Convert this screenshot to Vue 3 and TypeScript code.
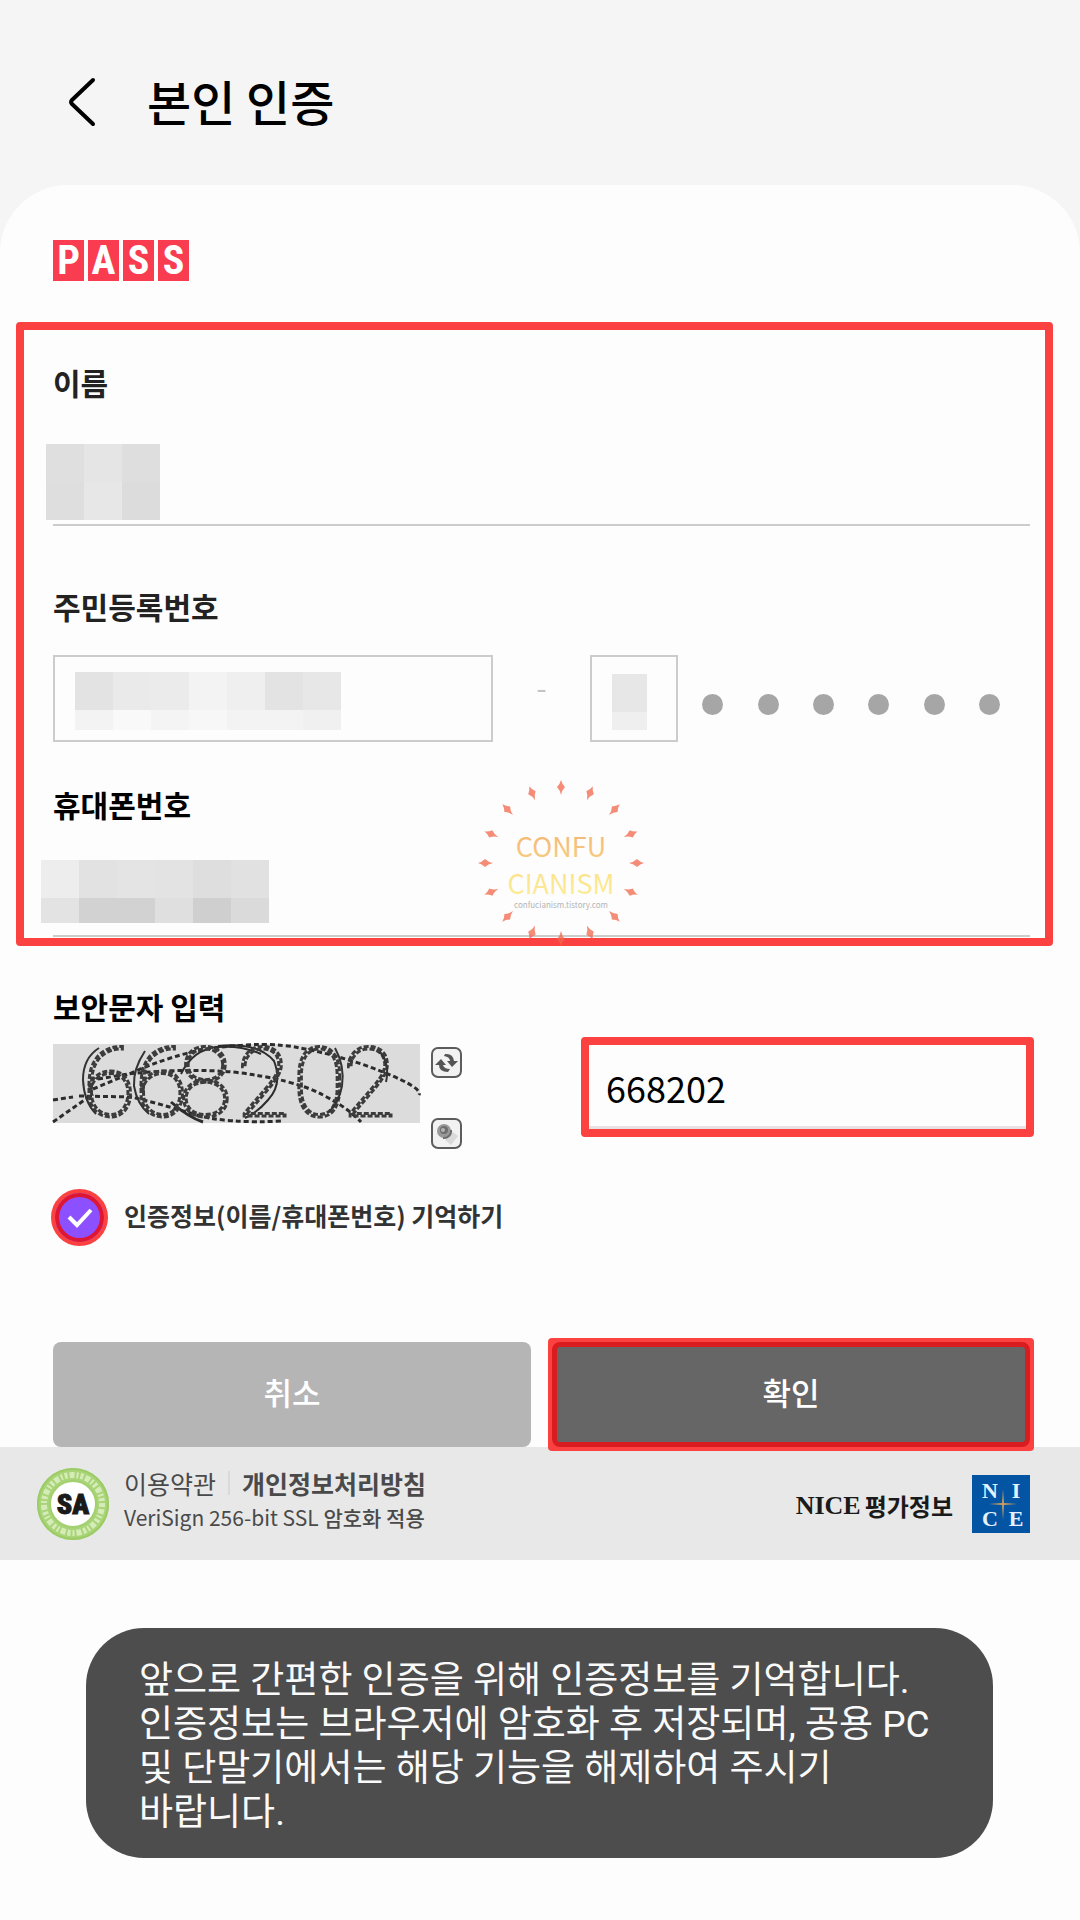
<script setup lang="ts">
import { ref } from 'vue'

const name = ref('')
const birth = ref('')
const gender = ref('')
const phone = ref('')
const captcha = ref('668202')
const remember = ref(true)

const passLetters = ['P', 'A', 'S', 'S']
const rayAngles = Array.from({ length: 16 }, (_, i) => i * 22.5)

const nameTiles = ['#dfdfdf', '#e5e5e5', '#dedede', '#dedede', '#e7e7e7', '#dcdcdc']
const birthTiles = [
  '#e3e3e3', '#eaeaea', '#ebebeb', '#f3f3f3', '#efefef', '#e3e3e3', '#e7e7e7',
  '#f3f3f3', '#f9f9f9', '#f4f4f4', '#f7f7f7', '#f3f3f3', '#f3f3f3', '#f0f0f0',
]
const genderTiles = ['#e7e7e7', '#efefef']
const phoneTiles = [
  '#ededed', '#e2e2e2', '#e4e4e4', '#e3e3e3', '#dedede', '#e1e1e1', '#fdfdfd',
  '#e3e3e3', '#d2d2d2', '#d2d2d2', '#dfdfdf', '#cfcfcf', '#dadada', '#fdfdfd',
]
</script>

<template>
  <div class="screen">
    <header class="topbar">
      <button class="back" type="button" aria-label="뒤로">
        <svg width="30" height="50" viewBox="0 0 30 50" fill="none" stroke="#000" stroke-width="4" stroke-linecap="round" stroke-linejoin="round">
          <path d="M27 3 L6 23 Q4 25 6 27 L27 47" />
        </svg>
      </button>
      <h1>본인 인증</h1>
    </header>

    <main class="card">
      <div class="pass">
        <span v-for="(letter, i) in passLetters" :key="i">{{ letter }}</span>
      </div>

      <form @submit.prevent>
        <section class="marked">
          <label class="label soft" for="name">이름</label>
          <div class="field name-field">
            <input id="name" v-model="name" type="text" />
            <div class="mosaic name-mosaic">
              <i v-for="(c, i) in nameTiles" :key="i" :style="{ background: c }"></i>
            </div>
          </div>

          <label class="label soft rrn-label" for="birth">주민등록번호</label>
          <div class="rrn">
            <div class="field box birth-field">
              <input id="birth" v-model="birth" type="text" />
              <div class="mosaic birth-mosaic">
                <i v-for="(c, i) in birthTiles" :key="i" :style="{ background: c }"></i>
              </div>
            </div>
            <span class="dash">-</span>
            <div class="field box gender-field">
              <input v-model="gender" type="text" aria-label="주민등록번호 뒷자리" />
              <div class="mosaic gender-mosaic">
                <i v-for="(c, i) in genderTiles" :key="i" :style="{ background: c }"></i>
              </div>
            </div>
            <div class="dots"><i v-for="n in 6" :key="n"></i></div>
          </div>

          <label class="label phone-label" for="phone">휴대폰번호</label>
          <div class="field phone-field">
            <input id="phone" v-model="phone" type="tel" />
            <div class="mosaic phone-mosaic">
              <i v-for="(c, i) in phoneTiles" :key="i" :style="{ background: c }"></i>
            </div>
          </div>

          <svg class="watermark" width="170" height="170" viewBox="0 0 170 170">
            <defs>
              <linearGradient id="orange" x1="0" y1="0" x2="0" y2="1">
                <stop offset="0" stop-color="#f3b273" />
                <stop offset="1" stop-color="#f8d083" />
              </linearGradient>
              <linearGradient id="yellow" x1="0" y1="0" x2="0" y2="1">
                <stop offset="0" stop-color="#fbdf84" />
                <stop offset="1" stop-color="#fcee9c" />
              </linearGradient>
            </defs>
            <g fill="#f0664a" fill-opacity="0.75">
              <path v-for="a in rayAngles" :key="a" d="M85 2 Q86 6 89 9 Q86 12 85 17 Q84 12 81 9 Q84 6 85 2 Z" :transform="`rotate(${a} 85 85)`" />
            </g>
            <g text-anchor="middle" font-family="'Noto Sans CJK KR', sans-serif" font-size="27">
              <text x="85" y="79" fill="url(#orange)">CONFU</text>
              <text x="85" y="116" fill="url(#yellow)">CIANISM</text>
              <text x="85" y="130" fill="#b4b4b4" font-size="8">confucianism.tistory.com</text>
            </g>
          </svg>
        </section>

        <div class="lower">
          <label class="label" for="captcha">보안문자 입력</label>
          <div class="captcha-row">
            <div class="captcha">
              <svg width="367" height="79" viewBox="0 0 367 79" role="img" aria-label="보안문자">
                <rect width="367" height="79" fill="#dcdcdc" />
                <g fill="none" stroke="#2c2c2c">
                  <path d="M0 56 L20 53 M26 52 L78 53 Q108 60 140 70 T230 77" stroke-width="3" stroke-dasharray="5 3" />
                  <path d="M0 78 L40 50 M40 45 L90 24 Q130 8 160 4 Q215 -3 247 4 Q290 12 330 28 T366 51" stroke-width="3" stroke-dasharray="5 3" />
                  <path d="M45 35 L75 30 Q130 24 180 28 Q240 35 270 51 Q295 64 308 78" stroke-width="3" stroke-dasharray="5 3" />
                  <path d="M118 58 Q135 73 150 78" stroke-width="3" />
                  <path d="M165 2 Q205 -2 221 17 Q230 40 215 56 Q205 68 192 74" stroke-width="2" />
                  <path d="M128 30 Q140 5 165 3 Q188 1 208 10" stroke-width="2" />
                </g>
                <text y="72" x="30 82 126 184 240 290" fill="none" stroke="#3c3c3c" stroke-width="3" stroke-dasharray="5 2" font-family="Roboto, sans-serif" font-size="96" font-weight="100">668202</text>
                <g fill="none" stroke="#333" stroke-width="2">
                  <path d="M46 4 Q30 14 30 36 Q31 58 43 70" />
                  <path d="M92 7 Q80 25 81 42 Q84 60 96 70" />
                  <path d="M282 4 Q292 22 289 42 Q286 58 276 68" />
                  <path d="M327 8 Q337 20 333 38" />
                </g>
              </svg>
            </div>
            <div class="tools">
              <button type="button" aria-label="새로고침">
                <svg width="27" height="27" viewBox="0 0 27 27">
                  <path d="M12 5 Q20 4 21 12 L25 12 L19 18 L14 12 L17 12 Q17 8 11 7 Z" fill="#555" />
                  <path d="M15 23 Q6 23 6 16 L2 16 L8 10 L13 16 L10 16 Q11 20 17 20 Z" fill="#555" />
                </svg>
              </button>
              <button type="button" aria-label="음성 듣기">
                <svg width="27" height="27" viewBox="0 0 27 27">
                  <path d="M12 20 L20 12 L25 16 L18 25 Z" fill="#d9d9d9" />
                  <circle cx="11" cy="11" r="7" fill="#999" />
                  <path d="M10 18 A7 7 0 0 0 18 10" fill="none" stroke="#6e6e6e" stroke-width="2" />
                  <circle cx="11" cy="10" r="4" fill="#6e6e6e" />
                  <circle cx="10" cy="10" r="2" fill="#b5b5b5" />
                </svg>
              </button>
            </div>
            <input id="captcha" v-model="captcha" class="captcha-input" type="text" />
          </div>

          <label class="remember">
            <span class="tick">
              <input v-model="remember" type="checkbox" />
              <svg v-if="remember" width="28" height="22" viewBox="0 0 28 22" fill="none" stroke="#fff" stroke-width="4">
                <path d="M3 10 L11 18 L25 3" />
              </svg>
            </span>
            <span class="remember-text">인증정보(이름/휴대폰번호) 기억하기</span>
          </label>

          <div class="actions">
            <button class="btn cancel" type="button">취소</button>
            <div class="confirm-mark">
              <button class="btn confirm" type="submit">확인</button>
            </div>
          </div>
        </div>
      </form>

      <footer class="foot">
        <svg class="seal" width="74" height="74" viewBox="0 0 74 74">
          <circle cx="37" cy="37" r="36" fill="#a9d478" />
          <circle cx="37" cy="37" r="35" fill="none" stroke="#9ccc66" stroke-width="2" />
          <circle cx="37" cy="37" r="29" fill="none" stroke="#d5ecb8" stroke-width="6" stroke-dasharray="3 2 5 2 2 2" />
          <circle cx="37" cy="37" r="23" fill="#fff" stroke="#a3d06e" stroke-width="2" />
          <text x="37" y="47" text-anchor="middle" font-family="'Roboto Condensed', 'Noto Sans CJK KR', sans-serif" font-size="28" font-weight="900" fill="#1a1a1a" stroke="#1a1a1a" stroke-width="1">SA</text>
        </svg>
        <div class="terms">
          <p class="links"><a href="#">이용약관</a><i></i><a href="#"><b>개인정보처리방침</b></a></p>
          <p class="ssl">VeriSign 256-bit SSL <span>암호화 적용</span></p>
        </div>
        <div class="nice"><span class="latin">NICE</span><span>평가정보</span></div>
        <svg class="nice-logo" width="58" height="58" viewBox="0 0 58 58">
          <rect width="58" height="58" fill="#0454a4" />
          <path d="M31 14 L32 28 L45 29 L32 30 L31 45 L30 30 L17 29 L30 28 Z" fill="#c89a60" />
          <g fill="#e4f2ff" text-anchor="middle" font-family="'Liberation Serif', serif" font-size="22" font-weight="700">
            <text x="18" y="23">N</text>
            <text x="44" y="23">I</text>
            <text x="18" y="51">C</text>
            <text x="44" y="51">E</text>
          </g>
        </svg>
      </footer>

      <p class="toast" role="status">
        앞으로 간편한 인증을 위해 인증정보를 기억합니다. 인증정보는 브라우저에 암호화 후 저장되며, 공용 PC 및 단말기에서는 해당 기능을 해제하여 주시기 바랍니다.
      </p>
    </main>
  </div>
</template>

<style>
body {
  background: #fdfdfd;
}
</style>

<style scoped>
.screen,
.screen * {
  box-sizing: border-box;
}
.screen {
  min-height: 100vh;
  background: #f5f5f5;
  color: #000;
  font-family: 'Noto Sans CJK KR', sans-serif;
  display: flex;
  flex-direction: column;
}
button,
input {
  margin: 0;
  padding: 0;
  border: 0;
  background: transparent;
  font-family: inherit;
  outline: none;
}
p {
  margin: 0;
}
.topbar {
  display: flex;
  align-items: center;
  gap: 51px;
  height: 185px;
  padding: 18px 66px 0;
}
.back,
.back svg {
  display: block;
}
h1 {
  margin: 0;
  padding-bottom: 4px;
  font-size: 48px;
  font-weight: 500;
  line-height: 72px;
}
.card {
  flex: 1;
  padding: 55px 0 62px;
  border-radius: 68px 68px 0 0;
  background: #fdfdfd;
}
.pass {
  display: flex;
  gap: 4px;
  padding-left: 53px;
}
.pass span {
  width: 31px;
  height: 41px;
  background: #f93c50;
  color: #fff;
  font: 700 40px/42px 'Roboto Condensed', 'Open Sans Condensed', 'Noto Sans CJK KR', sans-serif;
  text-align: center;
}
.marked {
  position: relative;
  margin: 41px 27px 0 16px;
  padding: 30px 15px 1px 29px;
  border: 8px solid #fc4141;
  border-radius: 4px;
}
.label {
  display: block;
  font-size: 30px;
  font-weight: 700;
  line-height: 44px;
}
.soft {
  color: #222;
}
.field {
  position: relative;
}
.field input {
  display: block;
  width: 100%;
  height: 100%;
  padding: 0 20px;
  font-size: 36px;
}
.name-field {
  height: 82px;
  margin-top: 40px;
  border-bottom: 2px solid #ccc;
}
.phone-field {
  height: 77px;
  margin-top: 34px;
  border-bottom: 2px solid #ccc;
}
.rrn-label {
  margin-top: 58px;
}
.phone-label {
  margin-top: 40px;
}
.rrn {
  display: flex;
  height: 87px;
  margin-top: 27px;
}
.box {
  border: 2px solid #ccc;
}
.birth-field {
  flex: 0 0 45%;
}
.gender-field {
  flex: 0 0 9%;
}
.dash {
  flex: 0 0 10%;
  color: #c4c4c4;
  font-size: 30px;
  line-height: 62px;
  text-align: center;
}
.dots {
  flex: 1;
  display: flex;
  justify-content: space-between;
  align-items: center;
  padding: 12px 30px 0 24px;
}
.dots i {
  width: 21px;
  height: 21px;
  border-radius: 50%;
  background: #a6a6a6;
}
.mosaic {
  position: absolute;
  display: grid;
}
.name-mosaic {
  left: -7px;
  bottom: 4px;
  grid-template: 38px 38px / repeat(3, 38px);
}
.birth-mosaic {
  left: 20px;
  top: 15px;
  grid-template: 38px 20px / repeat(7, 38px);
}
.gender-mosaic {
  left: 20px;
  top: 17px;
  grid-template: 38px 18px / 35px;
}
.phone-mosaic {
  left: -12px;
  top: 0;
  grid-template: 38px 25px / repeat(7, 38px);
}
.watermark {
  position: absolute;
  left: 452px;
  top: 448px;
}
.lower {
  padding: 38px 46px 0 53px;
}
.captcha-row {
  display: flex;
  align-items: flex-start;
  margin-top: 9px;
}
.captcha {
  margin-top: 7px;
}
.captcha svg {
  display: block;
  overflow: visible;
}
.tools {
  display: flex;
  flex-direction: column;
  gap: 40px;
  margin: 10px 0 0 11px;
}
.tools button {
  width: 31px;
  height: 31px;
  border: 2px solid #5c5c5c;
  border-radius: 7px;
  background: #f2f2f2;
}
.tools svg {
  display: block;
}
.captcha-input {
  flex: 1;
  height: 100px;
  margin-left: 119px;
  padding: 0 17px;
  border: 8px solid #fc4141;
  border-radius: 4px;
  box-shadow: inset 0 -3px 0 #e8e2e4;
  font-size: 36px;
}
.remember {
  display: flex;
  align-items: center;
  gap: 16px;
  margin: 40px 0 0 -2px;
  color: #333;
  font-size: 25px;
  font-weight: 700;
  line-height: 36px;
}
.remember-text {
  padding-bottom: 6px;
}
.tick {
  position: relative;
  display: grid;
  place-items: center;
  width: 57px;
  height: 57px;
}
.tick input {
  appearance: none;
  width: 57px;
  height: 57px;
  border: 4px solid #fc4141;
  border-radius: 50%;
  background: #8c50ff;
  box-shadow: inset 0 0 0 4px #dd1634;
}
.tick svg {
  position: absolute;
}
.actions {
  display: grid;
  grid-template-columns: 1fr 1fr;
  gap: 21px;
  margin: 96px 4px 0 0;
}
.btn {
  width: 100%;
  height: 105px;
  padding-bottom: 6px;
  border-radius: 8px;
  color: #fff;
  font-size: 31px;
  font-weight: 500;
}
.cancel {
  background: #b5b5b5;
}
.confirm-mark {
  position: relative;
  margin: -4px;
  padding: 4px;
  border-radius: 4px;
  background: #fc4141;
}
.confirm {
  display: block;
  border: 5px solid #d91c1f;
  background: #666;
}
.foot {
  display: flex;
  align-items: center;
  height: 113px;
  padding: 0 50px 0 36px;
  background: #e8e8e8;
  color: #4a4a4a;
}
.terms {
  margin: -10px auto 0 14px;
}
.links {
  display: flex;
  align-items: center;
  font-size: 25px;
  line-height: 36px;
}
.links i {
  width: 2px;
  height: 24px;
  margin: 0 12px;
  background: #dadada;
}
.links a {
  color: inherit;
  text-decoration: none;
}
.ssl {
  font-size: 21px;
  line-height: 32px;
}
.ssl span {
  font-weight: 500;
}
.nice {
  display: flex;
  align-items: center;
  gap: 4px;
  margin-right: 19px;
  padding-top: 4px;
  color: #1a1a1a;
  font-size: 24px;
  font-weight: 700;
  line-height: 36px;
}
.latin {
  font-family: 'Liberation Serif', serif;
  font-size: 26px;
}
.toast {
  margin: 68px 87px 0 86px;
  padding: 31px 54px 23px 53px;
  border-radius: 58px;
  background: #4d4d4d;
  color: #fafafa;
  font-family: Roboto, 'Noto Sans CJK KR', sans-serif;
  font-size: 37px;
  line-height: 44px;
  word-break: keep-all;
}
</style>
